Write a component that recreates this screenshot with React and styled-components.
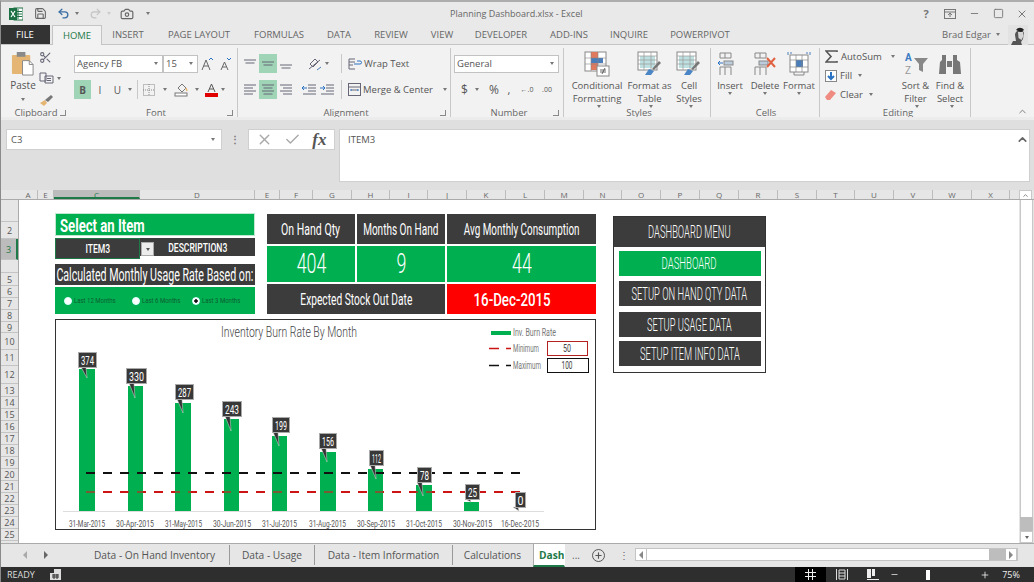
import React from 'react';
import styled, { createGlobalStyle } from 'styled-components';
import { Scissors, Camera, Save, Undo2, Redo2, X, Check, ChevronUp, Minus, Plus, Square } from 'lucide-react';

const Global = createGlobalStyle`
  html, body { margin: 0; padding: 0; background: #fff; }
  * { box-sizing: border-box; }
  body { font-family: "Open Sans", "Liberation Sans", sans-serif; }
`;
const Page = styled.div`
  width: 1034px; height: 582px; overflow: hidden; display: flex; flex-direction: column;
  background: #e4e4e4; color: #555; font-size: 10px; border-top: 2px solid #adadad; border-left: 1px solid #8a8a8a;
`;
/* Title bar */
const TitleBar = styled.div`
  height: 23px; display: flex; align-items: center; padding-left: 8px; background: #e9e9e9; position: relative;
`;
const QuickBtn = styled.span`
  width: ${p => p.$w}px; display: inline-flex; align-items: center; color: ${p => p.$c || '#666'};
`;
const TitleText = styled.div`
  position: absolute; left: 449px; top: 5px; font-size: 9px; color: #666; white-space: nowrap;
`;
const WindowBtns = styled.div`
  margin-left: auto; display: flex; align-items: center; color: #777;
`;
const WinBtn = styled.span`
  width: 24px; display: inline-flex; justify-content: center; font-size: 11px; font-weight: 700;
`;
const Caret = styled.span`
  display: inline-block; width: 0; height: 0; flex: none; border-left: 2.5px solid transparent; border-right: 2.5px solid transparent;
  border-top: 3px solid ${p => p.$c || '#777'}; margin: ${p => p.$m || '0 0 0 3px'}; vertical-align: middle;
`;
/* Ribbon tabs */
const TabBar = styled.div`
  height: 20px; display: flex; background: #e9e9e9; border-bottom: 1px solid #c4c4c4; position: relative;
`;
const FileTab = styled.div`
  width: 50px; margin-left: -1px; background: #333; color: #fff; display: flex; align-items: center; justify-content: center; font-size: 9.5px; margin-right: 2px;
`;
const RibbonTab = styled.div`
  width: ${p => p.$w}px; display: flex; align-items: center; justify-content: center; font-size: 9.5px; white-space: nowrap;
  color: ${p => p.$active ? '#1d7a48' : '#666'};
  ${p => p.$active ? 'background:#f2f2f2;border:1px solid #c4c4c4;border-bottom:none;height:20px;' : ''}
`;
const UserBox = styled.div`
  margin-left: auto; display: flex; align-items: center; font-size: 9.5px; color: #666; padding-right: 6px;
`;
/* Ribbon */
const Ribbon = styled.div`
  height: 75px; display: flex; background: #f2f2f2; position: relative; overflow: hidden;
  border-bottom: 3px solid #ececec;
`;
const Group = styled.div`
  width: ${p => p.$w}px; flex: none; display: flex; flex-direction: column; position: relative; padding-left: ${p => p.$pl || 0}px;
  &::after { content: ""; display: ${p => p.$nosep ? 'none' : 'block'}; position: absolute; right: 0; top: 3px; bottom: 0; width: 1px; background: #c8c8c8; }
`;
const GroupBody = styled.div`
  height: 63px; display: flex;
`;
const GroupLabel = styled.div`
  text-align: center; font-size: 9.5px; line-height: 9px; color: #666;
`;
const Launcher = styled.span`
  position: absolute; right: 5px; bottom: 1px; width: 6px; height: 6px; border-right: 1px solid #888; border-bottom: 1px solid #888;
`;
const Stack = styled.div`
  display: flex; flex-direction: column; padding-top: ${p => p.$pt ?? 9}px; gap: ${p => p.$gap ?? 7}px; width: ${p => p.$w ? p.$w + 'px' : 'auto'};
`;
const ToolRow = styled.div`
  display: flex; align-items: center; height: 19px;
`;
const ToolBtn = styled.span`
  width: ${p => p.$w}px; height: 19px; flex: none; display: inline-flex; align-items: center; justify-content: center;
  background: ${p => p.$on ? '#9fd4b6' : 'transparent'}; color: #555; font-size: ${p => p.$fs || 10}px; font-weight: ${p => p.$b ? 700 : 400};
`;
const VSep = styled.span`
  width: 1px; height: 19px; flex: none; background: #c8c8c8; margin: 0 ${p => p.$r ?? 6}px 0 ${p => p.$l ?? 6}px;
`;
const Select = styled.div`
  width: ${p => p.$w}px; height: 18px; flex: none; background: #fff; border: 1px solid #c2c2c2; display: flex; align-items: center; justify-content: space-between;
  padding: 0 4px 0 2px; font-size: 9.5px; color: #555; white-space: nowrap;
`;
const WrapLabel = styled.span`
  font-size: 9.5px; white-space: nowrap; margin-left: 2px;
`;
const PasteCol = styled.div`
  width: 32px; margin-left: 6px; display: flex; flex-direction: column; align-items: center; padding-top: 7px; flex: none; gap: 2px;
`;
const BigBtn = styled.div`
  width: ${p => p.$w}px; flex: none; display: flex; flex-direction: column; align-items: center; padding-top: 6px; font-size: 9.5px; line-height: 13px; text-align: center; white-space: nowrap; color: #555;
`;
const BigIcon = styled.div`
  height: 26px; margin-bottom: 2px; display: flex; align-items: center; justify-content: center;
`;
const SmallAction = styled.div`
  display: flex; align-items: center; height: 19px; gap: 3px; font-size: 9.5px; white-space: nowrap;
`;
const CollapseBtn = styled.span`
  position: absolute; right: 6px; bottom: 0; color: #777; display: flex;
`;
/* Formula bar */
const FormulaArea = styled.div`
  height: 70px; background: #dfdfdf; display: flex; align-items: flex-start; padding: 9px 4px 0 5px;
`;
const NameBox = styled.div`
  width: 216px; height: 21px; background: #fff; border: 1px solid #cfcfcf; display: flex; align-items: center; justify-content: space-between; padding: 0 6px 0 4px; font-size: 9.5px;
`;
const Grip = styled.div`
  width: 26px; text-align: center; color: #777; line-height: 20px; font-weight: 700;
`;
const FxBox = styled.div`
  width: 87px; height: 21px; background: #fff; border: 1px solid #cfcfcf; display: flex; align-items: center; justify-content: space-around; color: #aaa; padding: 0 2px;
`;
const FxGlyph = styled.span`
  font-family: "Liberation Serif", serif; font-style: italic; font-weight: 700; font-size: 17px; color: #555;
`;
const FormulaInput = styled.div`
  flex: 1; height: 53px; margin-left: 4px; background: #fff; border: 1px solid #cfcfcf; padding: 3px 0 0 8px; font-size: 9.5px; display: flex; justify-content: space-between; color: #555;
`;
/* Sheet */
const ColHeaders = styled.div`
  height: 10px; display: flex; background: #e6e6e6; overflow: hidden; border-bottom: 1px solid #aaa; padding-left: 18px;
`;
const ColHead = styled.div`
  width: ${p => p.$w}px; flex: none; text-align: center; font-size: 8px; line-height: 10px; border-right: 1px solid #bcbcbc;
  background: ${p => p.$sel ? '#bcbcbc' : 'transparent'}; color: ${p => p.$sel ? '#1d7a48' : '#666'};
  ${p => p.$sel ? 'border-bottom:2px solid #1d7a48;' : ''}
`;
const ColScrollBtn = styled.div`
  width: 13px; height: 10px; flex: none; margin: 0 2px 0 auto; background: #fff; border: 1px solid #c8c8c8; display: flex; align-items: center; justify-content: center;
`;
const Sheet = styled.div`
  height: 344px; display: flex; border-bottom: 1px solid #aaa;
`;
const RowHeaders = styled.div`
  width: 18px; flex: none; background: #e6e6e6; overflow: hidden; display: flex; flex-direction: column; border-right: 1px solid #aaa;
`;
const RowHead = styled.div`
  height: ${p => p.$h}px; flex: none; text-align: center; font-size: 9px; line-height: ${p => p.$h}px; border-bottom: 1px solid #c4c4c4; overflow: hidden;
  background: ${p => p.$sel ? '#bcbcbc' : 'transparent'}; color: ${p => p.$sel ? '#1d7a48' : '#555'};
  ${p => p.$sel ? 'border-right:2px solid #1d7a48;' : ''}
`;
const Canvas = styled.div`
  flex: 1; background: #fff; padding: 13px 0 0 36px; display: flex; gap: 17px; overflow: hidden;
`;
const VScroll = styled.div`
  width: 15px; flex: none; padding: 0 1px 0 1px; display: flex; flex-direction: column; background: #e4e4e4;
`;
const ScrollTrack = styled.div`
  flex: 1; background: #fff; border-left: 1px solid #c8c8c8; border-right: 1px solid #c8c8c8;
`;
const ScrollThumb = styled.div`
  height: 14px; background: #bdbdbd;
`;
const ScrollBtn = styled.div`
  height: 12px; background: #fff; display: flex; align-items: center; justify-content: center; border: 1px solid #c8c8c8;
`;
/* Dashboard */
const LeftStack = styled.div`
  width: 541px; flex: none; display: flex; flex-direction: column; gap: 4px;
`;
const TopRow = styled.div`
  display: flex; gap: 11px; height: 102px;
`;
const SelectCol = styled.div`
  width: 200px; flex: none; display: flex; flex-direction: column;
`;
const Agency = styled.span`
  display: inline-block; flex: none; white-space: nowrap; font-family: Roboto, "Liberation Sans", sans-serif; font-size: ${p => p.$fs}px; font-weight: ${p => p.$wt || 400};
  transform: scaleX(${p => p.$sx || 0.66}); transform-origin: ${p => p.$o || 'center'}; color: ${p => p.$c || '#fff'}; line-height: 1;
`;
const GreenHead = styled.div`
  height: 23px; background: #00b050; display: flex; align-items: center; padding: 3px 0 0 5px; outline: 1px solid #bfe8d0; outline-offset: -1px;
`;
const ItemRow = styled.div`
  height: 21px; margin-top: 2px; display: flex; position: relative;
`;
const ItemCell = styled.div`
  width: 85px; flex: none; background: #3c3c3c; display: flex; align-items: center; justify-content: center; border: 1px solid #1d7a48; height: 21px;
`;
const DescCell = styled.div`
  flex: 1; height: 19px; background: #3c3c3c; display: flex; align-items: center; justify-content: center; border-bottom: 1px solid #fff; overflow: hidden;
`;
const DropBtn = styled.div`
  position: absolute; left: 86px; top: 4px; width: 13px; height: 14px; background: #ececec; border: 1px solid #aaa; display: flex; align-items: center; justify-content: center;
`;
const CalcHead = styled.div`
  height: 21px; margin-top: 5px; background: #3c3c3c; display: flex; align-items: center; justify-content: center; overflow: hidden;
`;
const RadioBand = styled.div`
  height: 27px; margin-top: 2px; background: #00b050; display: flex; align-items: center; padding-left: 9px;
`;
const RadioItem = styled.div`
  width: ${p => p.$w}px; flex: none; display: flex; align-items: center; gap: 2px; overflow: hidden;
`;
const RadioDot = styled.span`
  width: 8px; height: 8px; border-radius: 50%; background: ${p => p.$on ? 'radial-gradient(#111 35%, #fff 45%)' : '#fff'}; border: 1px solid #dff;
  flex: none;
`;
const KpiGrid = styled.div`
  width: 329px; margin: 1px 0 0 1px; display: grid; grid-template-columns: 88px 88px 149px; grid-template-rows: 30px 36px 30px; gap: 2px;
`;
const KpiCell = styled.div`
  grid-column: ${p => p.$span ? `span ${p.$span}` : 'auto'}; background: ${p => p.$bg}; display: flex; align-items: center; justify-content: center; overflow: hidden; padding-right: ${p => p.$pr || 0}px;
`;
const Chart = styled.div`
  height: 211px; border: 1px solid #333; background: #fff;
`;
const ChartSvg = styled.svg`
  display: block; margin: -1px;
`;
const Menu = styled.div`
  width: 153px; height: 157px; flex: none; margin-top: 3px; border: 1px solid #333; background: #fff; display: flex; flex-direction: column; align-items: center;
`;
const MenuHead = styled.div`
  align-self: stretch; height: 30px; background: #3c3c3c; display: flex; align-items: center; justify-content: center; margin-bottom: 4px; overflow: hidden;
`;
const MenuBtn = styled.div`
  width: 142px; height: 25px; background: ${p => p.$on ? '#00b050' : '#3c3c3c'}; display: flex; align-items: center; justify-content: center; margin-bottom: ${p => p.$mb ?? 5}px; overflow: hidden;
`;
/* Sheet tabs */
const SheetTabs = styled.div`
  height: 22px; display: flex; align-items: flex-start; background: #e6e6e6; position: relative;
`;
const TabNav = styled.div`
  width: 79px; height: 22px; flex: none; display: flex; align-items: center; padding-left: 22px; gap: 17px;
`;
const NavArrow = styled.span`
  width: 0; height: 0; border-top: 4px solid transparent; border-bottom: 4px solid transparent; border-${p => p.$dir === 'l' ? 'right' : 'left'}: 4px solid ${p => p.$c};
`;
const SheetTab = styled.div`
  width: ${p => p.$w}px; height: ${p => p.$active ? 23 : 20}px; flex: none; display: flex; align-items: center; font-size: 10.2px; white-space: nowrap; color: #555; margin-top: ${p => p.$active ? 0 : 1}px;
  justify-content: center; border-right: 1px solid ${p => p.$sep ? '#999' : 'transparent'}; overflow: hidden;
  ${p => p.$active ? 'background:#fff;color:#1d7a48;font-weight:700;border-left:1px solid #aaa;border-bottom:2px solid #1d7a48;justify-content:flex-start;padding-left:5px;' : ''}
`;
const TabTools = styled.div`
  width: 70px; height: 22px; flex: none; display: flex; align-items: center; padding-left: 7px; color: #666;
`;
const PlusCircle = styled.span`
  width: 13px; height: 13px; border-radius: 50%; border: 1.5px solid #555; display: inline-flex; align-items: center; justify-content: center; margin: 0 14px 0 12px; color: #555;
`;
const HScroll = styled.div`
  flex: 1; height: 13px; margin: 4px 16px 0 0; background: #fff; border: 1px solid #c4c4c4; display: flex; align-items: stretch;
`;
const HBtn = styled.div`
  width: 11px; flex: none; background: #fff; display: flex; align-items: center; justify-content: center; border-right: 1px solid #c4c4c4;
`;
const HThumb = styled.div`
  width: 17px; margin-left: auto; background: #bdbdbd;
`;
/* Status bar */
const StatusBar = styled.div`
  height: 15px; flex: none; background: #2e2e2e; color: #ddd; display: flex; align-items: center; padding-left: 6px; font-size: 9px; margin-top: 1px;
`;
const ModeGap = styled.span`
  width: 15px; flex: none;
`;
const StatusRight = styled.div`
  margin-left: auto; display: flex; align-items: center; height: 15px; color: #eee; padding-right: 5px;
`;
const ViewBtn = styled.span`
  width: 31px; height: 15px; display: inline-flex; align-items: center; justify-content: center; background: ${p => p.$on ? '#000' : 'transparent'};
`;
const Zoom = styled.div`
  width: 105px; display: flex; align-items: center; justify-content: space-between; padding: 0 3px 0 2px;
`;
const ZoomThumb = styled.span`
  width: 4px; height: 10px; background: #fff; margin-right: 24px;
`;
const ZoomPct = styled.span`
  width: 36px; text-align: center; font-size: 9px;
`;
const IndentGap = styled.span`
  width: 4px; flex: none;
`;

/* Drawn icons */
const ExcelLogo = () => (
  <svg width="14" height="14" viewBox="0 0 14 14"><rect x="5" y="1" width="9" height="12" fill="#fff" stroke="#1d7044" /><path d="M9 2v10M6 4.5h7M6 7h7M6 9.500h7" stroke="#1d7044" /><rect x="0" y="1" width="8" height="12" fill="#1d7044" /><path d="M2 4l4 6M6 4l-4 6" stroke="#fff" strokeWidth="1.2" /></svg>
);
const PasteIcon = () => (
  <svg width="24" height="24" viewBox="0 0 25 25"><rect x="1" y="3" width="19" height="20" rx="1" fill="#e5b673" /><rect x="6" y="0" width="9" height="5" fill="#8a8a8a" /><path d="M12 9h7l4 4v11H12z" fill="#fff" stroke="#888" /><path d="M19 9v4h4" fill="none" stroke="#888" /></svg>
);
const CopyIcon = () => (
  <svg width="15" height="12" viewBox="0 0 15 12" fill="none" stroke="#667"><path d="M1 1h6v8H1zM6 4h8v7H6z" fill="#f2f2f2" /><path d="M8 6.5h4M8 8.5h4" /></svg>
);
const BrushIcon = () => (
  <svg width="14" height="12" viewBox="0 0 14 12"><path d="M1 9l5-3 2 3-3 3z" fill="#e5b673" /><path d="M6 6l6-5 2 2-5 5z" fill="#777" /></svg>
);
const Lines = ({ y, align = 'c', w = 12 }) => {
  const rows = y.map((yy, i) => {
    const ln = i % 2 ? w - 3 : w;
    const x = align === 'l' ? 0 : align === 'r' ? w - ln : (w - ln) / 2;
    return <path key={i} d={`M${x} ${yy}h${ln}`} stroke="#667" />;
  });
  return <svg width={w} height="13" viewBox={`0 0 ${w} 13`}>{rows}</svg>;
};
const BorderIcon = () => (
  <svg width="12" height="12" viewBox="0 0 12 12" fill="none" stroke="#888" strokeDasharray="1 1"><rect x="0.5" y="0.5" width="11" height="11" /><path d="M6 0v12M0 6h12" /></svg>
);
const FillIcon = () => (
  <svg width="15" height="15" viewBox="0 0 15 15" fill="none" stroke="#777"><path d="M4 6l4-4 4 4-4 4z" /><path d="M12 6l1 3" stroke="#e5b673" strokeWidth="1.5" /><rect x="1" y="11" width="12" height="3" fill="#fff" /></svg>
);
const GrowA = ({ fs, d }) => (
  <svg width="14" height="14" viewBox="0 0 14 14" fill="none" stroke="#666"><path d={fs} /><path d={d} stroke="#2a72c2" /></svg>
);
const OrientIcon = () => (
  <svg width="14" height="14" viewBox="0 0 14 14" fill="none" stroke="#667"><path d="M1 12L12 3M2 7l5-5 3 3-5 5z" /><path d="M9 13l4-3" stroke="#4a7ebb" /></svg>
);
const IndentIcon = ({ flip }) => (
  <svg width="14" height="11" viewBox="0 0 14 11" fill="none" stroke="#667"><path d="M6 1h8M6 4h8M6 7h8M1 10h13" /><path d={flip ? 'M0 4h5M3 2l2 2-2 2' : 'M0 4h5M2 2L0 4l2 2'} stroke="#2a72c2" /></svg>
);
const WrapIcon = () => (
  <svg width="14" height="12" viewBox="0 0 14 12" fill="none" stroke="#667"><path d="M1 1v10M1 1h6M1 4h6M1 7h4M1 11h6" /><path d="M6 6h6a1 1 0 000-3H9" stroke="#2a72c2" /></svg>
);
const MergeIcon = () => (
  <svg width="13" height="13" viewBox="0 0 13 13" fill="none" stroke="#667"><rect x="0.5" y="0.5" width="12" height="12" /><path d="M0 4h13M3 7h7" /><path d="M3 6v2M10 6v2" stroke="#2a72c2" /></svg>
);
const FontColorIcon = () => (
  <svg width="13" height="14" viewBox="0 0 13 14"><path d="M3 9l3.500-8 3.500 8M4.500 6h4" stroke="#555" fill="none" /><rect y="10" width="13" height="4" fill="#e00000" /></svg>
);
const CondIcon = () => (
  <svg width="26" height="26" viewBox="0 0 26 26"><rect x="1" y="1" width="21" height="19" fill="#fff" stroke="#888" /><rect x="7" y="1" width="7" height="6" fill="#e07a5f" /><rect x="7" y="7" width="12" height="5" fill="#4a7ebb" /><rect x="7" y="12" width="7" height="7" fill="#e07a5f" /><path d="M7 1v19M14 1v19M1 7h21M1 13h21" stroke="#888" fill="none" strokeWidth=".6" /><rect x="13" y="15" width="12" height="10" fill="#fff" stroke="#888" /><path d="M16 19h6M16 21h6M18 23l3-6" stroke="#444" strokeWidth=".8" /></svg>
);
const TableIcon = () => (
  <svg width="26" height="26" viewBox="0 0 26 26"><rect x="1" y="1" width="19" height="18" fill="#fff" stroke="#888" /><rect x="3" y="5" width="15" height="12" fill="#bfe0e0" /><path d="M1 5h19M1 9h19M1 13h19M7 1v18M14 1v18" stroke="#999" strokeWidth=".7" fill="none" /><path d="M15 18l7-8 2 2-7 7z" fill="#777" /><path d="M8 24l4-6 5 2-3 4z" fill="#4a86c5" /></svg>
);
const CellsIcon = ({ kind }) => (
  <svg width="26" height="26" viewBox="0 0 26 26" fill="none" stroke="#888">
    {kind === 'fmt' ? <><rect x="4" y="4" width="18" height="17" fill="#fff" /><rect x="10" y="9" width="7" height="7" fill="#4a7ebb" stroke="none" /><path d="M4 9h18M4 16h18M10 4v17M16 4v17" strokeWidth=".7" /><path d="M2 1v3M24 1v3M6 2H4M20 2h2" stroke="#4a7ebb" /><path d="M8 21v3h10v-3" /></> : <>
      <path d="M3 2h11v5H3zM8 2v5M3 16h11M8 16v8M3 16v8M14 16v8" /><rect x="7" y="10" width="9" height="4" fill="#bcd" />
      {kind === 'ins' ? <path d="M1 12h5M3 10l-2 2 2 2" stroke="#2a72c2" /> : <path d="M15 7l8 9M23 7l-8 9" stroke="#e0613f" strokeWidth="2" />}
    </>}
  </svg>
);
const SortIcon = () => (
  <svg width="26" height="26" viewBox="0 0 26 26"><text x="2" y="10" fontSize="10" fontWeight="700" fill="#3b7cc4" fontFamily="Roboto, sans-serif">A</text><text x="2" y="23" fontSize="10" fill="#999" fontFamily="Roboto, sans-serif">Z</text><path d="M11 7h14l-5 6v8l-4-2v-6z" fill="#888" /></svg>
);
const BinocIcon = () => (
  <svg width="24" height="24" viewBox="0 0 24 24" fill="#777"><path d="M1 22l1-12 2-2V3h4v19zM15 22V3h4v5l3 2 1 12z" /><rect x="9" y="9" width="5" height="6" /></svg>
);
const Avatar = () => (
  <svg width="20" height="20" viewBox="0 0 20 20"><rect width="20" height="20" fill="#e2e2e2" /><path d="M3 20l2-4h3l-1-6c0-5 7-7 9-2l-1 6-2 3 1 3z" fill="#555" /><path d="M10 7h5l.5 4-2 4-3-2z" fill="#d5d5d5" /><path d="M8 5c2-3 6-3 8 0l-3 2z" fill="#222" /></svg>
);
const ClearIcon = () => (
  <svg width="12" height="12" viewBox="0 0 12 12"><path d="M0 8l6-7 5 3-6 7H2z" fill="#ef8b80" /></svg>
);
const FillDown = () => (
  <svg width="12" height="12" viewBox="0 0 12 12"><rect x="0.500" y="0.500" width="11" height="11" fill="#fff" stroke="#888" /><path d="M6 2v7M3 6l3 3 3-3" stroke="#2a72c2" strokeWidth="2" fill="none" /></svg>
);
const Sigma = () => (
  <svg width="13" height="13" viewBox="0 0 13 13" fill="none" stroke="#555" strokeWidth="1.6"><path d="M12 2V1H1l5 5.5L1 12h11v-1" /></svg>
);
const RibbonDisplay = () => (
  <svg width="12" height="10" viewBox="0 0 12 10" fill="none" stroke="#777"><rect x=".5" y=".5" width="11" height="9" /><path d="M.5 3h11M6 8V4M4 6l2-2 2 2" /></svg>
);
const StatusGrid = () => (
  <svg width="11" height="11" viewBox="0 0 11 11" fill="none" stroke="#eee"><path d="M3.500 0v11M7.500 0v11M0 3.500h11M0 7.500h11" /></svg>
);
const StatusPage = () => (
  <svg width="12" height="11" viewBox="0 0 12 11" fill="none" stroke="#ddd"><path d="M.5 0v11M11.500 0v11M3 1h6v9H3zM3 4h6M3 7h6" /></svg>
);
const StatusBreak = () => (
  <svg width="12" height="11" viewBox="0 0 12 11"><rect x="0" y="0" width="4" height="9" fill="#eee" /><rect x="5" y="0" width="3" height="7" fill="#eee" /><path d="M0 10.500h12" stroke="#eee" /></svg>
);
const CellMode = () => (
  <svg width="11" height="11" viewBox="0 0 11 11"><rect width="11" height="11" fill="#ddd" /><rect x="0" y="0" width="4" height="4" fill="#2e2e2e" /><path d="M2 6h7M2 8h7M4 5v5M7 5v5" stroke="#2e2e2e" /></svg>
);

/* Data */
const colHeads = [['A', 19], ['E', 16], ['C', 86, true], ['D', 115], ['E', 25], ['F', 33], ['G', 39], ['H', 38], ['I', 38], ['J', 39], ['K', 39], ['L', 39], ['M', 39], ['N', 38], ['O', 39], ['P', 39], ['Q', 39], ['R', 39], ['S', 39], ['T', 38], ['U', 39], ['V', 39], ['W', 39], ['X', 38]];
const rowHeads = [['', 22], ['2', 17], ['3', 21, true], ['', 13], ['5', 13], ['6', 12], ['7', 12], ['8', 12], ['9', 11], ['10', 17], ['11', 16], ['12', 18], ['13', 13], ['14', 12], ['15', 12], ['16', 12], ['17', 12], ['18', 12], ['19', 12], ['20', 12], ['21', 12], ['22', 12], ['23', 12], ['24', 12], ['25', 12]];
const ribbonTabs = [['INSERT', 52], ['PAGE LAYOUT', 90], ['FORMULAS', 70], ['DATA', 50], ['REVIEW', 54], ['VIEW', 48], ['DEVELOPER', 70], ['ADD-INS', 66], ['INQUIRE', 54], ['POWERPIVOT', 88]];
const bars = [[79, 16, 369], [128, 15, 386], [175, 16, 403], [224, 15, 419], [272, 15, 436], [320, 16, 452], [368, 15, 469], [416, 16, 485], [464, 15, 502]];
const callouts = [['374', 78, 352, 18, 87, 378], ['330', 126, 368, 20, 135, 398], ['287', 175, 384, 18, 183, 413], ['243', 222, 401, 19, 231, 431], ['199', 272, 417, 17, 279, 446], ['156', 319, 433, 17, 327, 462], ['112', 369, 450, 14, 376, 479], ['78', 417, 467, 14, 423, 496], ['25', 465, 484, 14, 471, 502], ['0', 515, 492, 10, 519, 511]];
const dates = [['31-Mar-2015', 69, 36], ['30-Apr-2015', 116, 38], ['31-May-2015', 165, 37], ['30-Jun-2015', 213, 38], ['31-Jul-2015', 262, 35], ['31-Aug-2015', 309, 37], ['30-Sep-2015', 357, 38], ['31-Oct-2015', 406, 36], ['30-Nov-2015', 453, 39], ['16-Dec-2015', 501, 38]];

const fit = { fontFamily: 'Roboto, "Liberation Sans", sans-serif', lengthAdjust: 'spacingAndGlyphs' };

const BurnChart = () => (
  <ChartSvg width="541" height="211" viewBox="55 319 541 211">
    <defs>
      <clipPath id="barclip">{bars.map(([x, w, y], i) => <rect key={i} x={x} y={y} width={w} height={511 - y} />)}</clipPath>
    </defs>
    <text x="221" y="337" textLength="136" fontSize="14" fontWeight="300" fill="#444" {...fit}>Inventory Burn Rate By Month</text>
    {bars.map(([x, w, y], i) => <rect key={i} x={x} y={y} width={w} height={511 - y} fill="#00b050" />)}
    <path d="M63 511.500H544" stroke="#ddd" />
    <path d="M86 473H521" stroke="#111" strokeWidth="2" strokeDasharray="9 8" />
    <path d="M86 492H521" stroke="#cc1414" strokeWidth="2" strokeDasharray="9 8" />
    <path d="M86 492H521" stroke="#7a5a33" strokeWidth="2" strokeDasharray="9 8" clipPath="url(#barclip)" />
    {callouts.map(([t, x, y, w, tx, ty]) => (
      <g key={t}>
        <path d={`M${tx - 6} ${y + 15}L${tx} ${ty}L${tx - 1} ${y + 15}Z`} fill="#333" stroke="#ddd" strokeWidth=".5" />
        <rect x={x + .5} y={y + .5} width={w} height="15" fill="#383838" stroke="#aaa" />
        <text x={x + w / 2 + .5} y={y + 13} fontSize="13" fill="#fff" textAnchor="middle" textLength={Math.max(w - 5, 6)} {...fit}>{t}</text>
      </g>
    ))}
    {dates.map(([t, x, w]) => <text key={t} x={x} y="527" fontSize="9" fill="#555" textLength={w} {...fit}>{t}</text>)}
    <rect x="491" y="331" width="20" height="4" fill="#00b050" />
    <text x="513" y="336" fontSize="10" fill="#777" textLength="43" {...fit}>Inv. Burn Rate</text>
    <path d="M489 348.500h10M506 348.500h5" stroke="#cc1414" strokeWidth="1.5" />
    <text x="513" y="352" fontSize="10" fill="#777" textLength="26" {...fit}>Minimum</text>
    <rect x="547.500" y="341.500" width="40" height="14" fill="#fff" stroke="#b52020" />
    <text x="567" y="352" fontSize="10" fill="#444" textAnchor="middle" textLength="8" {...fit}>50</text>
    <path d="M489 365.500h10M506 365.500h5" stroke="#111" strokeWidth="1.5" />
    <text x="513" y="369" fontSize="10" fill="#777" textLength="28" {...fit}>Maximum</text>
    <rect x="547.500" y="358.500" width="41" height="14" fill="#fff" stroke="#111" />
    <text x="567" y="369" fontSize="10" fill="#444" textAnchor="middle" textLength="11" {...fit}>100</text>
  </ChartSvg>
);

export default function App() {
  return (
    <Page>
      <Global />
      <TitleBar>
        <QuickBtn $w={25}><ExcelLogo /></QuickBtn>
        <QuickBtn $w={23}><Save size={13} /></QuickBtn>
        <QuickBtn $w={32} $c="#3b6ea5"><Undo2 size={13} strokeWidth={2.5} /><Caret $m="0 0 0 5px" /></QuickBtn>
        <QuickBtn $w={31} $c="#c2c2c2"><Redo2 size={13} /><Caret $c="#ccc" $m="0 0 0 5px" /></QuickBtn>
        <QuickBtn $w={26}><Camera size={14} /></QuickBtn>
        <QuickBtn $w={10}><Caret $m="0" /></QuickBtn>
        <TitleText>Planning Dashboard.xlsx - Excel</TitleText>
        <WindowBtns>
          <WinBtn>?</WinBtn>
          <WinBtn><RibbonDisplay /></WinBtn>
          <WinBtn><Minus size={11} /></WinBtn>
          <WinBtn><Square size={11} /></WinBtn>
          <WinBtn><X size={12} /></WinBtn>
        </WindowBtns>
      </TitleBar>
      <TabBar>
        <FileTab>FILE</FileTab>
        <RibbonTab $w={50} $active>HOME</RibbonTab>
        {ribbonTabs.map(([t, w]) => <RibbonTab key={t} $w={w}>{t}</RibbonTab>)}
        <UserBox>Brad Edgar<Caret $m="0 8px 0 5px" /><Avatar /></UserBox>
      </TabBar>
      <Ribbon>
        <Group $w={70} $nosep>
          <GroupBody>
            <PasteCol><PasteIcon /><span>Paste</span><Caret $m="4px 0 0" /></PasteCol>
            <Stack $pt={4} $gap={5}>
              <ToolRow><Scissors size={13} color="#667" /></ToolRow>
              <ToolRow><CopyIcon /><Caret /></ToolRow>
              <ToolRow><BrushIcon /></ToolRow>
            </Stack>
          </GroupBody>
          <GroupLabel>Clipboard</GroupLabel>
          <Launcher />
        </Group>
        <Group $w={167} $pl={3}>
          <GroupBody>
            <Stack>
              <ToolRow>
                <Select $w={89}>Agency FB<Caret /></Select>
                <Select $w={35}>15<Caret /></Select>
                <ToolBtn $w={18}><GrowA fs="M2 13L6 3l4 10M3.500 9h5" d="M9 3l2-2 2 2" /></ToolBtn>
                <ToolBtn $w={18}><GrowA fs="M3 13l3.500-8L10 13M4.500 10h4" d="M9 1l2 2 2-2" /></ToolBtn>
              </ToolRow>
              <ToolRow>
                <ToolBtn $w={17} $on $b>B</ToolBtn>
                <ToolBtn $w={18}>I</ToolBtn>
                <ToolBtn $w={17}>U</ToolBtn>
                <Caret $m="0 2px 0 2px" />
                <VSep $l={3} $r={5} />
                <BorderIcon />
                <Caret $m="0 0 0 8px" />
                <ToolBtn $w={28}><FillIcon /></ToolBtn>
                <Caret $m="0 5px 0 0" />
                <ToolBtn $w={14} $b><FontColorIcon /></ToolBtn>
                <Caret />
              </ToolRow>
            </Stack>
          </GroupBody>
          <GroupLabel>Font</GroupLabel>
          <Launcher />
        </Group>
        <Group $w={213} $pl={3}>
          <GroupBody>
            <Stack>
              <ToolRow>
                <ToolBtn $w={18}><Lines y={[3, 6]} /></ToolBtn>
                <ToolBtn $w={18} $on><Lines y={[5, 8]} /></ToolBtn>
                <ToolBtn $w={18}><Lines y={[8, 11]} /></ToolBtn>
                <ToolBtn $w={46}><OrientIcon /><Caret /></ToolBtn>
                <VSep $l={0} />
                <WrapIcon /><WrapLabel>Wrap Text</WrapLabel>
              </ToolRow>
              <ToolRow>
                <ToolBtn $w={18}><Lines y={[2, 5, 8, 11]} align="l" /></ToolBtn>
                <ToolBtn $w={18} $on><Lines y={[2, 5, 8, 11]} /></ToolBtn>
                <ToolBtn $w={18}><Lines y={[2, 5, 8, 11]} align="r" /></ToolBtn>
                <ToolBtn $w={46}><IndentIcon /><IndentGap /><IndentIcon flip /></ToolBtn>
                <VSep $l={0} />
                <MergeIcon /><WrapLabel>Merge &amp; Center</WrapLabel><Caret $m="0 0 0 10px" />
              </ToolRow>
            </Stack>
          </GroupBody>
          <GroupLabel>Alignment</GroupLabel>
          <Launcher />
        </Group>
        <Group $w={113} $pl={3}>
          <GroupBody>
            <Stack>
              <ToolRow><Select $w={105}>General<Caret /></Select></ToolRow>
              <ToolRow>
                <ToolBtn $w={21} $fs={12}>$</ToolBtn>
                <Caret $m="0 8px 0 0" />
                <ToolBtn $w={14} $fs={12}>%</ToolBtn>
                <ToolBtn $w={16} $fs={11}>,</ToolBtn>
                <ToolBtn $w={20} $fs={7}>←.0</ToolBtn>
                <ToolBtn $w={20} $fs={7}>.00</ToolBtn>
              </ToolRow>
            </Stack>
          </GroupBody>
          <GroupLabel>Number</GroupLabel>
          <Launcher />
        </Group>
        <Group $w={147} $pl={3}>
          <GroupBody>
            <BigBtn $w={60}><BigIcon><CondIcon /></BigIcon>Conditional<br />Formatting <Caret /></BigBtn>
            <BigBtn $w={45}><BigIcon><TableIcon /></BigIcon>Format as<br />Table <Caret /></BigBtn>
            <BigBtn $w={34}><BigIcon><TableIcon /></BigIcon>Cell<br />Styles <Caret /></BigBtn>
          </GroupBody>
          <GroupLabel>Styles</GroupLabel>
        </Group>
        <Group $w={109} $pl={1}>
          <GroupBody>
            <BigBtn $w={36}><BigIcon><CellsIcon kind="ins" /></BigIcon>Insert<br /><Caret $m="0" /></BigBtn>
            <BigBtn $w={34}><BigIcon><CellsIcon kind="del" /></BigIcon>Delete<br /><Caret $m="0" /></BigBtn>
            <BigBtn $w={34}><BigIcon><CellsIcon kind="fmt" /></BigIcon>Format<br /><Caret $m="0" /></BigBtn>
          </GroupBody>
          <GroupLabel>Cells</GroupLabel>
        </Group>
        <Group $w={151} $pl={5}>
          <GroupBody>
            <Stack $pt={2} $gap={0} $w={74}>
              <SmallAction><Sigma />AutoSum<Caret $m="0 0 0 6px" /></SmallAction>
              <SmallAction><FillDown />Fill<Caret /></SmallAction>
              <SmallAction><ClearIcon />Clear<Caret /></SmallAction>
            </Stack>
            <BigBtn $w={33}><BigIcon><SortIcon /></BigIcon>Sort &amp;<br />Filter <Caret /></BigBtn>
            <BigBtn $w={36}><BigIcon><BinocIcon /></BigIcon>Find &amp;<br />Select <Caret /></BigBtn>
          </GroupBody>
          <GroupLabel>Editing</GroupLabel>
        </Group>
        <CollapseBtn><ChevronUp size={11} /></CollapseBtn>
      </Ribbon>
      <FormulaArea>
        <NameBox>C3<Caret /></NameBox>
        <Grip>⋮</Grip>
        <FxBox><X size={17} /><Check size={17} /><FxGlyph>fx</FxGlyph></FxBox>
        <FormulaInput>ITEM3<ChevronUp size={13} strokeWidth={3} color="#666" /></FormulaInput>
      </FormulaArea>
      <ColHeaders>
        {colHeads.map(([t, w, sel], i) => <ColHead key={i} $w={w} $sel={sel}>{t}</ColHead>)}
        <ColScrollBtn><ChevronUp size={7} strokeWidth={3} color="#777" /></ColScrollBtn>
      </ColHeaders>
      <Sheet>
        <RowHeaders>
          {rowHeads.map(([t, h, sel], i) => <RowHead key={i} $h={h} $sel={sel}>{t}</RowHead>)}
        </RowHeaders>
        <Canvas>
          <LeftStack>
            <TopRow>
              <SelectCol>
                <GreenHead><Agency $fs={18} $wt={700} $sx={0.73} $o="left">Select an Item</Agency></GreenHead>
                <ItemRow>
                  <ItemCell><Agency $fs={13} $wt={500}>ITEM3</Agency></ItemCell>
                  <DropBtn><Caret $c="#555" $m="0" /></DropBtn>
                  <DescCell><Agency $fs={13} $wt={500}>DESCRIPTION3</Agency></DescCell>
                </ItemRow>
                <CalcHead><Agency $fs={19} $sx={0.56}>Calculated Monthly Usage Rate Based on:</Agency></CalcHead>
                <RadioBand>
                  <RadioItem $w={68}><RadioDot /><Agency $fs={8} $c="#0d5c33" $sx={0.75} $o="left">Last 12 Months</Agency></RadioItem>
                  <RadioItem $w={60}><RadioDot /><Agency $fs={8} $c="#0d5c33" $sx={0.75} $o="left">Last 6 Months</Agency></RadioItem>
                  <RadioItem $w={60}><RadioDot $on /><Agency $fs={8} $c="#0d5c33" $sx={0.75} $o="left">Last 3 Months</Agency></RadioItem>
                </RadioBand>
              </SelectCol>
              <KpiGrid>
                <KpiCell $bg="#3c3c3c"><Agency $fs={17} $sx={0.62}>On Hand Qty</Agency></KpiCell>
                <KpiCell $bg="#3c3c3c"><Agency $fs={17} $sx={0.59}>Months On Hand</Agency></KpiCell>
                <KpiCell $bg="#3c3c3c"><Agency $fs={17} $sx={0.58}>Avg Monthly Consumption</Agency></KpiCell>
                <KpiCell $bg="#00b050"><Agency $fs={27} $wt={300}>404</Agency></KpiCell>
                <KpiCell $bg="#00b050"><Agency $fs={27} $wt={300}>9</Agency></KpiCell>
                <KpiCell $bg="#00b050"><Agency $fs={27} $wt={300}>44</Agency></KpiCell>
                <KpiCell $bg="#3c3c3c" $span={2}><Agency $fs={17} $sx={0.6}>Expected Stock Out Date</Agency></KpiCell>
                <KpiCell $bg="#ff0000" $pr={18}><Agency $fs={19} $wt={500} $sx={0.7}>16-Dec-2015</Agency></KpiCell>
              </KpiGrid>
            </TopRow>
            <Chart><BurnChart /></Chart>
          </LeftStack>
          <Menu>
            <MenuHead><Agency $fs={18} $wt={300} $sx={0.52}>DASHBOARD MENU</Agency></MenuHead>
            <MenuBtn $on><Agency $fs={17} $wt={300} $sx={0.56}>DASHBOARD</Agency></MenuBtn>
            <MenuBtn $mb={6}><Agency $fs={18} $wt={300} $sx={0.52}>SETUP ON HAND QTY DATA</Agency></MenuBtn>
            <MenuBtn $mb={4}><Agency $fs={18} $wt={300} $sx={0.52}>SETUP USAGE DATA</Agency></MenuBtn>
            <MenuBtn><Agency $fs={18} $wt={300} $sx={0.52}>SETUP ITEM INFO DATA</Agency></MenuBtn>
          </Menu>
        </Canvas>
        <VScroll>
          <ScrollTrack />
          <ScrollThumb />
          <ScrollBtn><Caret $c="#666" $m="0" /></ScrollBtn>
        </VScroll>
      </Sheet>
      <SheetTabs>
        <TabNav><NavArrow $dir="l" $c="#aaa" /><NavArrow $dir="r" $c="#666" /></TabNav>
        <SheetTab $w={150} $sep>Data - On Hand Inventory</SheetTab>
        <SheetTab $w={85} $sep>Data - Usage</SheetTab>
        <SheetTab $w={138} $sep>Data - Item Information</SheetTab>
        <SheetTab $w={80}>Calculations</SheetTab>
        <SheetTab $w={32} $active>Dash</SheetTab>
        <TabTools>...<PlusCircle><Plus size={9} strokeWidth={3} /></PlusCircle>⋮</TabTools>
        <HScroll>
          <HBtn><NavArrow $dir="l" $c="#888" /></HBtn>
          <HThumb />
          <HBtn><NavArrow $dir="r" $c="#888" /></HBtn>
        </HScroll>
      </SheetTabs>
      <StatusBar>
        READY
        <ModeGap />
        <CellMode />
        <StatusRight>
          <ViewBtn $on><StatusGrid /></ViewBtn>
          <ViewBtn><StatusPage /></ViewBtn>
          <ViewBtn><StatusBreak /></ViewBtn>
          <Zoom><Minus size={9} /><ZoomThumb /><Plus size={10} /></Zoom>
          <ZoomPct>75%</ZoomPct>
        </StatusRight>
      </StatusBar>
    </Page>
  );
}
